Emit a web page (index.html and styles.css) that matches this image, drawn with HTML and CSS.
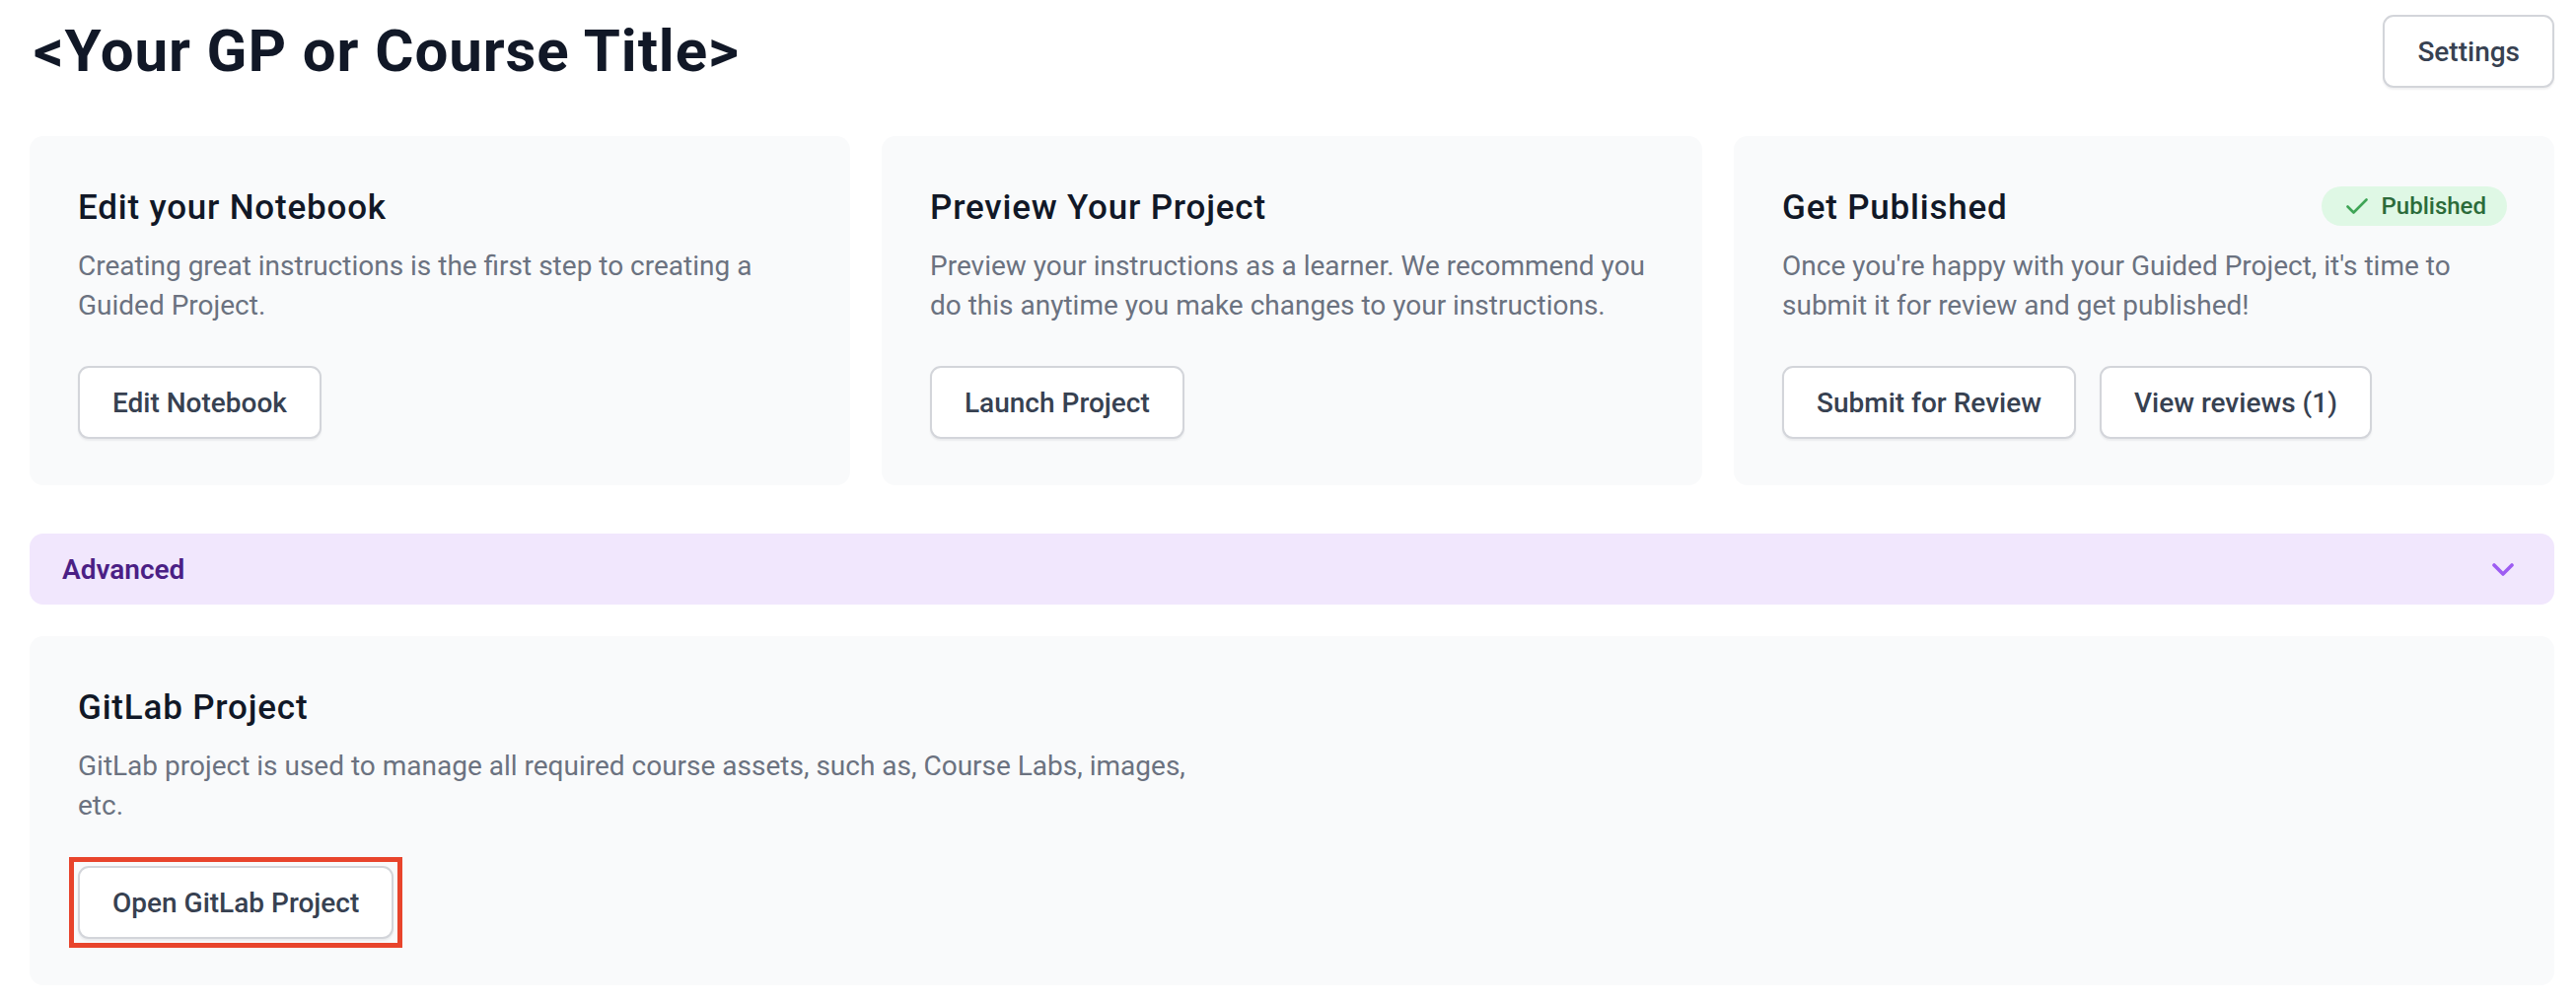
FILE: index.html
```html
<!DOCTYPE html>
<html lang="en">
<head>
<meta charset="utf-8">
<title>Guided Project</title>
<link rel="stylesheet" href="styles.css">
</head>
<body>
<div class="page">
  <header class="header">
    <h1 class="title">&lt;Your GP or Course Title&gt;</h1>
    <button class="btn">Settings</button>
  </header>

  <section class="cards">
    <div class="card">
      <div class="card-head">
        <h2 class="card-title">Edit your Notebook</h2>
      </div>
      <p class="card-text">Creating great instructions is the first step to creating a Guided Project.</p>
      <div class="actions">
        <button class="btn">Edit Notebook</button>
      </div>
    </div>
    <div class="card">
      <div class="card-head">
        <h2 class="card-title">Preview Your Project</h2>
      </div>
      <p class="card-text">Preview your instructions as a learner. We recommend you do this anytime you make changes to your instructions.</p>
      <div class="actions">
        <button class="btn">Launch Project</button>
      </div>
    </div>
    <div class="card">
      <div class="card-head">
        <h2 class="card-title">Get Published</h2>
        <span class="badge">
          <svg class="badge-icon" viewBox="0 0 22 17" width="22" height="17"><path d="M1.5 8.5 L7.5 14.5 L20.5 1.5" fill="none" stroke="#3fa556" stroke-width="2.6" stroke-linecap="round" stroke-linejoin="round"/></svg>
          Published
        </span>
      </div>
      <p class="card-text">Once you're happy with your Guided Project, it's time to submit it for review and get published!</p>
      <div class="actions">
        <button class="btn">Submit for Review</button>
        <button class="btn">View reviews (1)</button>
      </div>
    </div>
  </section>

  <div class="advanced">
    <span class="advanced-label">Advanced</span>
    <svg class="chevron" viewBox="0 0 22 13" width="22" height="13"><path d="M2 2 L11 11 L20 2" fill="none" stroke="#9d5cf2" stroke-width="3.6" stroke-linecap="round" stroke-linejoin="round"/></svg>
  </div>

  <section class="card wide">
    <div class="card-head">
      <h2 class="card-title">GitLab Project</h2>
    </div>
    <p class="card-text narrow">GitLab project is used to manage all required course assets, such as, Course Labs, images, etc.</p>
    <div class="actions">
      <span class="highlight"><button class="btn">Open GitLab Project</button></span>
    </div>
  </section>
</div>
</body>
</html>
```

FILE: styles.css
```css
* { box-sizing: border-box; }
html, body { margin: 0; padding: 0; background: #ffffff; }
body {
  font-family: Roboto, "Noto Sans", "Liberation Sans", sans-serif;
  color: #111827;
}
.page {
  width: 2590px;
  padding: 15px 0 0 30px;
}
.header {
  display: flex;
  justify-content: space-between;
  align-items: center;
  height: 74px;
  margin-bottom: 49px;
}
.title {
  margin: 0;
  padding-left: 4px;
  font-size: 60px;
  line-height: 74px;
  font-weight: 700;
  letter-spacing: 0.9px;
  color: #111827;
}
.btn {
  font-family: inherit;
  height: 74px;
  padding: 0 33px;
  background: #ffffff;
  border: 2px solid #d3d5da;
  border-radius: 11px;
  box-shadow: 0 2px 2px rgba(17, 24, 39, 0.06);
  font-size: 28px;
  font-weight: 500;
  color: #374151;
  cursor: pointer;
  white-space: nowrap;
}
.cards {
  display: grid;
  grid-template-columns: repeat(3, 1fr);
  gap: 32px;
}
.card {
  background: #f9fafb;
  border-radius: 14px;
  padding: 51px 48px 47px 49px;
}
.card-head {
  display: flex;
  justify-content: space-between;
  align-items: center;
  height: 44px;
}
.card-title {
  margin: 0;
  font-size: 35px;
  line-height: 44px;
  font-weight: 500;
  letter-spacing: 0.8px;
  color: #111827;
}
.card-text {
  margin: 17px 0 0;
  font-size: 28px;
  line-height: 40px;
  color: #6b7280;
}
.card-text.narrow { max-width: 1150px; }
.actions {
  display: flex;
  gap: 24px;
  margin-top: 41px;
}
.badge {
  display: inline-flex;
  align-items: center;
  gap: 14px;
  height: 40px;
  margin-top: -4px;
  padding: 0 21px 0 25px;
  border-radius: 20px;
  background: #dff8e5;
  color: #2c6b3a;
  font-size: 24px;
  font-weight: 500;
}
.badge-icon { display: block; }
.advanced {
  display: flex;
  justify-content: space-between;
  align-items: center;
  height: 72px;
  margin: 49px 0 32px;
  padding: 0 41px 0 33px;
  background: #f1e7fd;
  border-radius: 14px;
}
.advanced-label {
  font-size: 28px;
  font-weight: 600;
  color: #4b1f85;
}
.chevron { display: block; }
.highlight {
  display: inline-flex;
  margin: -9px;
  padding: 4px;
  border: 5px solid #e8442c;
}
```
